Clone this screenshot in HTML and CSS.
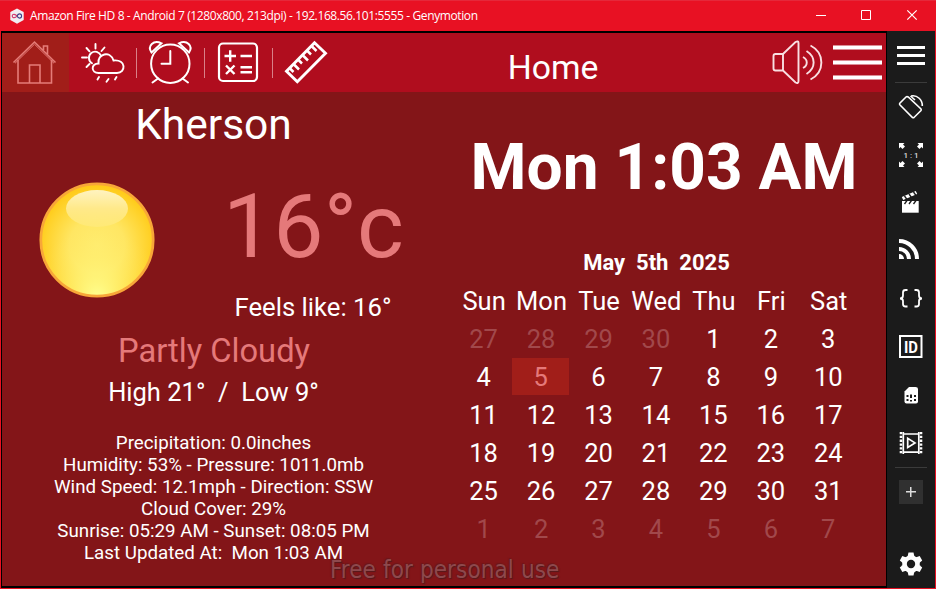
FILE: index.html
```html
<!DOCTYPE html>
<html lang="en">
<head>
<meta charset="utf-8">
<title>Genymotion</title>
<link rel="stylesheet" href="styles.css">
</head>
<body>
<div class="window">
  <header class="titlebar">
    <svg class="logo" viewBox="9 7 16 16" width="16" height="16"><path d="M17 7.5L23.7 11V19L17 22.7L10.3 19V11Z" fill="#f1edf2"/><path d="M17 15C15.5 13 12.3 12.5 12.3 15S15.5 17 17 15" fill="none" stroke="#d43c70" stroke-width="1.2"/><path d="M17 15C18.500 12 21.600 12.500 21.600 15S18.500 18 17 15" fill="none" stroke="#3b3f86" stroke-width="1.200"/></svg>
    <span class="title">Amazon Fire HD 8 - Android 7 (1280x800, 213dpi) - 192.168.56.101:5555 - Genymotion</span>
    <svg class="controls" viewBox="798 0 138 31" width="138" height="31" fill="none" stroke="#fff"><path d="M816 15.500H826M861.500 10.500H870.500V19.500H861.500Z"/><path d="M907.300 10.300L916.700 19.700M916.700 10.300L907.300 19.700" stroke-width="1.200"/></svg>
  </header>
  <div class="body">
    <main class="app">
      <nav class="nav">
        <svg class="tile active" viewBox="2 33 67 59" fill="none" stroke="#e57c78" stroke-width="1.600"><path d="M13.500 62.500L34.500 42L55.500 62.500M18 60V83H51.500V60M29.500 83V65H40V83M43.500 50V46H47.500V54"/><path d="M15 63.300L34.500 44.200L54 63.300" stroke-width="1"/></svg>
        <svg class="tile" viewBox="69 33 67 59" fill="none" stroke="#fff" stroke-width="1.900" stroke-linecap="round"><path d="M92 63.200A6.200 6.200 0 1 1 101 55.800M95.500 44V48.500M86.500 48L89.500 51.300M82 57.500H87M86.500 67L89.500 64M104.500 47.500L101.500 51"/><path d="M98.500 73C91 73 90.500 63.500 98.500 63.500C97 53.500 110.500 50.500 113.500 60.500C126.500 59 126 73 117 73Z"/><path d="M99 77L97.500 79.500M108.500 79L106.500 81.700M116.500 77L115 79.500"/></svg>
        <i class="divider"></i>
        <svg class="tile" viewBox="137 33 67 59" fill="none" stroke="#fff" stroke-width="2" stroke-linecap="round"><circle cx="170.300" cy="63.700" r="19.200"/><path d="M170.300 51V63.700H161.500M158 78.500L152.500 82.500M182.500 78.500L188 82.500M151.500 52.500C147 46 153.500 39.500 161.500 43.300Z M189 52.500C193.500 46 187 39.500 179 43.300Z"/></svg>
        <i class="divider"></i>
        <svg class="tile" viewBox="205 33 67 59" fill="none" stroke="#fff" stroke-width="2.200"><rect x="219" y="43.500" width="38" height="37.500" rx="4"/><path d="M224.500 56H236M230.200 50.300V61.700M240.500 56H252M240.500 67.300H252M240.500 72.300H252M226 65.500L234.500 74M234.500 65.500L226 74" stroke-width="2.400"/></svg>
        <i class="divider"></i>
        <svg class="tile" viewBox="273 33 67 59" fill="none" stroke="#fff" stroke-width="2.900"><path d="M314.500 42.700L325.500 53.200L297.300 81.800L286.500 71.200Z"/><path d="M289.500 68L293.500 72M293.500 64L299 69.500M298 59.500L302 63.500M302.500 55L308 60.500M307 50.500L311 54.500M311.500 46L316.500 51" stroke-width="2.500"/></svg>
        <h1 class="heading">Home</h1>
        <svg class="speaker" viewBox="770 33 58 59" width="58" height="59" fill="none" stroke="#f9dfe2" stroke-width="1.900"><path d="M783 54H775.500Q773.500 54 773.500 56V68.500Q773.500 70.500 775.500 70.500H783ZM783 54L795.500 42Q798.500 40.500 798.500 43V81Q798.500 84 795.500 82.500L783 70.500"/><path d="M803 57C808 59.500 808 65.500 803 68M806.500 51C816 57 816 68 806.500 74M810.500 45.500C825 53 825 72 810.500 79.500"/></svg>
        <div class="menu"><i></i><i></i><i></i></div>
      </nav>
      <div class="panes">
        <section class="weather">
          <div class="city">Kherson</div>
          <div class="now">
            <svg class="sun" viewBox="0 0 116 116" width="116" height="116">
              <defs>
                <radialGradient id="disc" cx=".5" cy=".55" r=".55"><stop offset="0" stop-color="#ffec70"/><stop offset=".45" stop-color="#ffe663"/><stop offset=".85" stop-color="#ffd22a"/><stop offset="1" stop-color="#ffc814"/></radialGradient>
                <radialGradient id="glow" cx=".5" cy="1" r=".6"><stop offset="0" stop-color="#ffff90"/><stop offset="1" stop-color="#ffea60" stop-opacity="0"/></radialGradient>
                <linearGradient id="shine" x2="0" y2="1"><stop offset="0" stop-color="#fff3c0"/><stop offset=".5" stop-color="#ffe98a"/><stop offset="1" stop-color="#ffea7a" stop-opacity=".8"/></linearGradient>
              </defs>
              <circle cx="58" cy="58" r="56" fill="url(#disc)"/><circle cx="58" cy="58" r="56" fill="url(#glow)"/><circle cx="58" cy="58" r="56.200" fill="none" stroke="#f8a638" stroke-width="2.700"/><ellipse cx="58" cy="26.500" rx="31" ry="18.500" fill="url(#shine)"/>
            </svg>
            <div class="reading"><div class="temp">16°c</div><div class="feels">Feels like: 16°</div></div>
          </div>
          <div class="condition">Partly Cloudy</div>
          <div class="range">High 21°&nbsp; /&nbsp; Low 9°</div>
          <div class="details">
            <div>Precipitation: 0.0inches</div><div>Humidity: 53% - Pressure: 1011.0mb</div><div>Wind Speed: 12.1mph - Direction: SSW</div><div>Cloud Cover: 29%</div><div>Sunrise: 05:29 AM - Sunset: 08:05 PM</div><div>Last Updated At:&nbsp; Mon 1:03 AM</div>
          </div>
        </section>
        <section class="clock">
          <div class="time">Mon 1:03 AM</div>
          <div class="date">May&nbsp; 5th&nbsp; 2025</div>
          <div class="calendar">
            <b>Sun</b><b>Mon</b><b>Tue</b><b>Wed</b><b>Thu</b><b>Fri</b><b>Sat</b>
            <span class="dim">27</span><span class="dim">28</span><span class="dim">29</span><span class="dim">30</span><span>1</span><span>2</span><span>3</span>
            <span>4</span><span class="today">5</span><span>6</span><span>7</span><span>8</span><span>9</span><span>10</span>
            <span>11</span><span>12</span><span>13</span><span>14</span><span>15</span><span>16</span><span>17</span>
            <span>18</span><span>19</span><span>20</span><span>21</span><span>22</span><span>23</span><span>24</span>
            <span>25</span><span>26</span><span>27</span><span>28</span><span>29</span><span>30</span><span>31</span>
            <span class="dim">1</span><span class="dim">2</span><span class="dim">3</span><span class="dim">4</span><span class="dim">5</span><span class="dim">6</span><span class="dim">7</span>
          </div>
        </section>
      </div>
      <div class="watermark">Free for personal use</div>
    </main>
    <aside class="tools">
      <div class="burger"><i></i><i></i><i></i></div>
      <hr>
      <svg viewBox="887 83 48 48" fill="none" stroke="#fff" stroke-width="1.600"><path d="M906 97L899.800 103.200Q899.200 104 899.800 104.700L912.500 117.500Q913.300 118 914 117.500L921 110.500Q921.500 109.700 921 109L908.200 97Q907 96.200 906 97Z"/><path d="M911 96C917.500 94.700 922.500 100 922.300 106M910.500 96L915 100"/></svg>
      <svg viewBox="887 131 48 48" fill="#fff"><path d="M899 143H904.500L903 144.500L905 146.500L902.500 149L900.500 147L899 148.500ZM923 143V148.500L921.500 147L919.500 149L917 146.500L919 144.500L917.500 143ZM899 167V161.500L900.500 163L902.500 161L905 163.500L903 165.500L904.500 167ZM923 167H917.500L919 165.500L917 163.500L919.500 161L921.500 163L923 161.500Z"/><text x="912" y="158" class="ratio">1:1</text></svg>
      <svg viewBox="887 179 48 48"><path d="M902 201H918.700V212.700H902Z" fill="#fff"/><path d="M902.500 198.500L916.500 192.500" stroke="#fff" stroke-width="3.500"/><path d="M904.500 196L907 199.500M909 194L911.500 197.500M913.500 192L916 195.500M907 200.500L904.500 204M911.500 200.500L909 204M916 200.500L913.500 204" stroke="#1b1b1b" stroke-width="1.300"/></svg>
      <svg viewBox="887 227 48 48" fill="none" stroke="#fff" stroke-width="4"><path d="M899 241A18 18 0 0 1 917 259M899 249A10 10 0 0 1 909 259"/><path d="M899 254A5 5 0 0 1 904 259H899Z" fill="#fff" stroke="none"/></svg>
      <svg viewBox="887 275 48 48" fill="none" stroke="#fff" stroke-width="1.800"><path d="M907.500 290H905.500Q903 290 903 292.500V295.500Q903 298.500 900 298.500Q903 298.500 903 301V304Q903 306.500 905.500 306.500H907.500M914.500 290H916.500Q919 290 919 292.500V295.500Q919 298.500 922 298.500Q919 298.500 919 301V304Q919 306.500 916.500 306.500H914.500"/></svg>
      <svg viewBox="887 323 48 48" fill="none" stroke="#fff" stroke-width="2"><path d="M900 336H921.500V357H900Z"/><text x="904" y="352.700" class="ident" textLength="14" lengthAdjust="spacingAndGlyphs">ID</text></svg>
      <svg viewBox="887 371 48 48"><path d="M909 387H915.500Q918 387 918 389V401.500Q918 403.500 916 403.500H906.500Q904.500 403.500 904.500 401.500V391.500Z" fill="#fff"/><path d="M906.500 395H908.500V397H906.500ZM910 394.500H912V398H910ZM914 395H916V397H914ZM906.500 399H908.500V401H906.500ZM910 400H912V401.500H910ZM914 399H916V401H914Z" fill="#1b1b1b"/></svg>
      <svg viewBox="887 419 48 48" fill="none" stroke="#fff" stroke-width="1.700"><path d="M901 432V454M921 432V454" stroke-width="2.600" stroke-dasharray="2.300 1.500"/><path d="M903.300 432V454M918.800 432V454M903 434H919M903 452.200H919M907.700 438.200V447.500L915 442.900Z"/></svg>
      <hr>
      <div class="slot"><div class="plus"></div></div>
      <svg class="gear" viewBox="-24 -24 48 48"><g fill="#fff"><circle r="8.800"/><path id="tooth" d="M-3.300 -8L-2.500 -11.500H2.500L3.300 -8V8L2.500 11.500H-2.500L-3.300 8Z"/><use href="#tooth" transform="rotate(60)"/><use href="#tooth" transform="rotate(120)"/></g><circle r="4.200" fill="#1b1b1b"/></svg>
    </aside>
  </div>
</div>
</body>
</html>
```
FILE: styles.css
```css
* { box-sizing: border-box; }
body { margin: 0; width: 936px; height: 589px; overflow: hidden; font-family: Roboto, sans-serif; color: #fff; background: #e81123; }
svg { display: block; flex: none; }
.window { width: 936px; height: 589px; display: flex; flex-direction: column; border-top: 1px solid #e5283a; }
.titlebar { height: 30px; display: flex; align-items: center; padding-left: 9px; background: #e81123; }
.logo { margin-right: 5px; }
.title { flex: 1; font: 12px/30px "Open Sans", sans-serif; letter-spacing: -0.38px; white-space: nowrap; }
.controls { margin-top: -1px; }
.body { display: flex; height: 557px; margin: 0 1px; background: #000; }
.app { position: relative; width: 884px; height: 553px; margin: 2px 1px 2px; background: #831518; }
.nav { height: 59px; display: flex; align-items: center; background: #b00d1e; }
.tile { width: 67px; height: 59px; }
.active { background: #a11e19; }
.divider { width: 1px; height: 30px; background: #d98088; }
.heading { margin: 11px 0 0; flex: 1; text-align: center; padding-right: 4px; font-size: 33.7px; line-height: 50px; font-weight: 400; }
.menu { width: 49px; height: 35px; margin: 0 4px 0 5px; display: flex; flex-direction: column; justify-content: space-between; }
.menu i { height: 5px; background: #fff; border: solid #dc8d95; border-width: 1px 0; }
.panes { display: flex; }
.weather { width: 423px; text-align: center; }
.city { height: 66px; line-height: 66px; font-size: 42.5px; }
.now { height: 170px; display: flex; padding-left: 37px; }
.sun { margin-top: 23.500px; }
.reading { width: 222px; margin-left: 50px; }
.temp { height: 138px; line-height: 138px; font-size: 89.500px; color: #e5797a; padding-right: 3px; }
.feels { height: 22px; line-height: 22px; font-size: 25.700px; padding-right: 4px; }
.condition { height: 44px; line-height: 46px; font-size: 32.700px; color: #e5797a; padding-left: 1px; }
.range { height: 40px; line-height: 40px; font-size: 25.500px; }
.details { margin-top: 20px; font-size: 18.750px; line-height: 22px; }
.clock { width: 461px; text-align: center; }
.time { height: 150px; line-height: 152px; font-size: 64px; font-weight: 700; padding-left: 17px; }
.date { height: 40px; line-height: 41px; font-size: 22px; font-weight: 700; padding-left: 2px; }
.calendar { margin-left: 29.900px; width: 402px; display: grid; grid-template-columns: repeat(7, 57.450px); grid-auto-rows: 38px; line-height: 39px; font-size: 25.500px; }
.calendar b { font-weight: 400; white-space: nowrap; line-height: 38px; padding-left: 1px; }
.dim { color: #a1484b; }
.today { color: #e5797a; background: #a11e19; width: 56.500px; height: 37px; }
.watermark { position: absolute; left: 328px; top: 523px; font: 24px/28px "DejaVu Sans Condensed", "DejaVu Sans", sans-serif; font-stretch: condensed; letter-spacing: 0.100px; color: #8d494d; text-shadow: 1px 1px 1px #54191c, -1px -1px 1px #6b171a; white-space: nowrap; }
.tools { width: 48px; height: 557px; background: #1b1b1b; display: flex; flex-direction: column; }
.tools svg, .slot { width: 48px; height: 48px; flex: none; }
.tools hr { width: 32px; height: 1px; margin: 0 8px; border: 0; background: #3b3b3b; flex: none; }
.burger { height: 51px; width: 28px; padding: 15px 0 17px; margin: 0 auto; display: flex; flex-direction: column; justify-content: space-between; flex: none; }
.burger i { height: 3px; background: #fff; }
.slot { display: grid; place-items: center; }
.plus { width: 24px; height: 24px; background: linear-gradient(#ddd, #ddd) center/10px 1.500px no-repeat, linear-gradient(#ddd, #ddd) center/1.500px 10px no-repeat, #303030; }
.tools .gear { margin-top: 24px; }
.ratio { font: 500 8px Roboto, sans-serif; text-anchor: middle; letter-spacing: 2px; fill: #ddd; }
.ident { font: 700 16px Roboto, sans-serif; fill: #fff; stroke: none; }
```
